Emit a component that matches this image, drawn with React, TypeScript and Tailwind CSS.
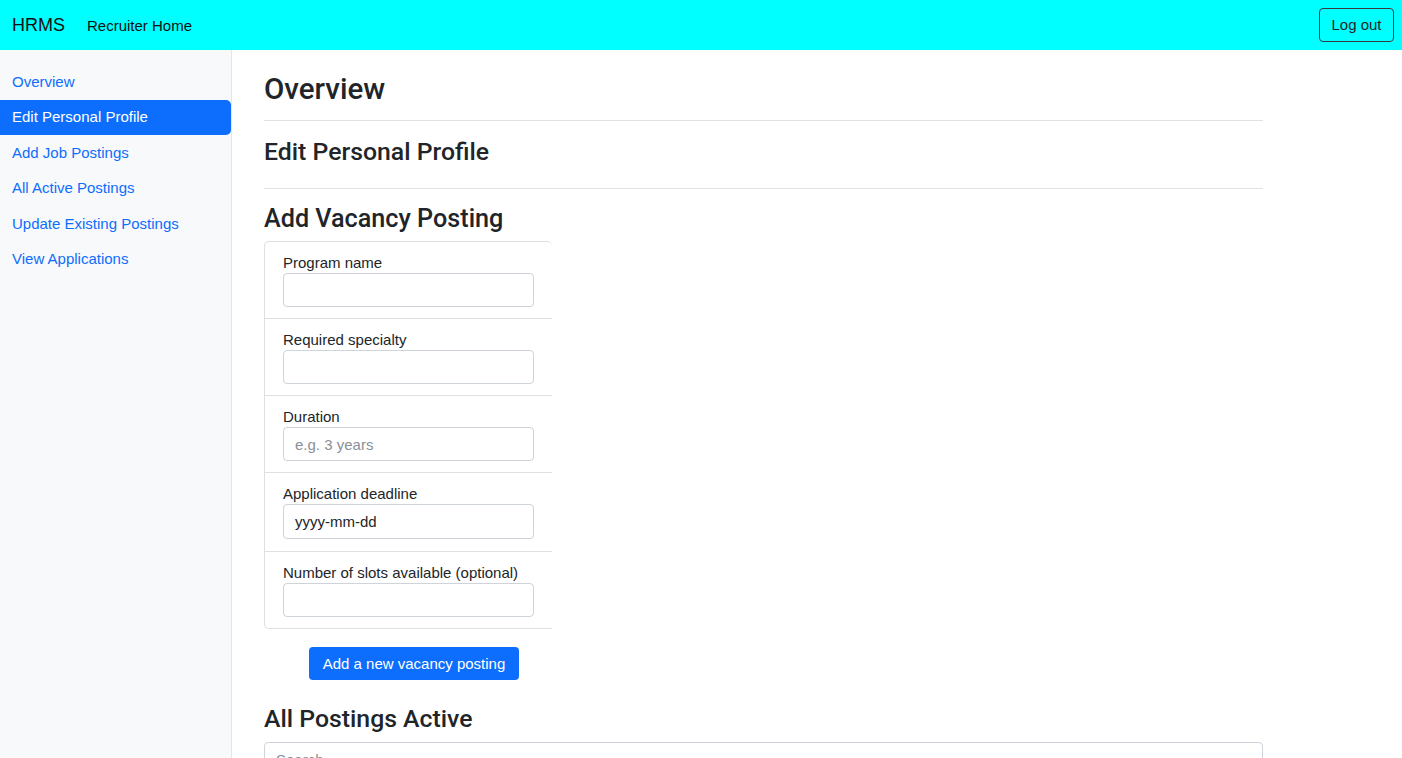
import React from "react";

const font = { fontFamily: '"Liberation Sans", Arial, sans-serif' };
const hfont = { fontFamily: 'Roboto, "Liberation Sans", Arial, sans-serif' };

function Field({ label, placeholder, value, last, tall }: { label: string; placeholder?: string; value?: string; last?: boolean; tall?: boolean }) {
  return (
    <div className={`pl-[18px] pr-[17px] pt-[10px] ${tall ? "pb-[12px]" : "pb-[11px]"} ${last ? "" : "border-b border-[#dfdfdf]"}`}>
      <div className="text-[15px] leading-[21px] text-[#212529]">{label}</div>
      <div className={`w-[251px] ${tall ? "h-[35px]" : "h-[34px]"} border border-[#ced4da] rounded-[4px] bg-white flex items-center px-[11px] pt-[2px] text-[15px]`}>
        {placeholder && <span className="text-[#8a9097]">{placeholder}</span>}
        {value && <span className="text-[#212529]">{value}</span>}
      </div>
    </div>
  );
}

export default function App() {
  const nav = ["Overview", "Edit Personal Profile", "Add Job Postings", "All Active Postings", "Update Existing Postings", "View Applications"];
  return (
    <div style={font} className="w-[1402px] h-[758px] overflow-hidden bg-white text-[#212529] flex flex-col">
      <header className="h-[50px] shrink-0 bg-[#00ffff] flex items-center pl-[12px] pr-[8px]">
        <span className="text-[18px] text-[#111] pt-[1px]">HRMS</span>
        <span className="ml-[22px] text-[15px] text-[#111] pt-[3px]">Recruiter Home</span>
        <button className="ml-auto h-[34px] w-[75px] border border-[#343a40] rounded-[4px] text-[15px] text-[#212529] pt-[1px]">Log out</button>
      </header>
      <div className="flex flex-1 min-h-0">
        <aside className="w-[232px] shrink-0 bg-[#f8f9fa] border-r border-[#e3e5e8] pt-[14px]">
          {nav.map((n, i) => (
            <div
              key={n}
              className={`h-[35.5px] flex items-center px-[12px] text-[15px] ${i === 1 ? "bg-[#0d6efd] text-white rounded-r-[5px]" : "text-[#0d6efd]"}`}
            >
              {n}
            </div>
          ))}
        </aside>
        <main className="flex-1 pl-[32px] pt-[22px]">
          <div className="w-[999px]">
            <h2 style={hfont} className="text-[29.5px] leading-[34px] font-medium">Overview</h2>
            <hr className="mt-[14px] border-0 border-t border-[#e2e2e2]" />
            <h3 style={hfont} className="mt-[15px] pt-[1px] text-[24.8px] leading-[30px] font-medium">Edit Personal Profile</h3>
            <hr className="mt-[21px] border-0 border-t border-[#e2e2e2]" />
            <h3 style={hfont} className="mt-[14px] pt-[1px] text-[25.2px] leading-[30px] font-medium">Add Vacancy Posting</h3>
            <div className="mt-[7px] w-[288px] border-l border-t border-b border-[#dfdfdf] rounded-l-[5px] rounded-tr-[5px]">
              <Field label="Program name" />
              <Field label="Required specialty" />
              <Field label="Duration" placeholder="e.g. 3 years" />
              <Field label="Application deadline" value="yyyy-mm-dd" tall />
              <Field label="Number of slots available (optional)" last />
            </div>
            <button className="mt-[18px] ml-[45px] h-[33px] w-[210px] bg-[#0d6efd] rounded-[4px] text-white text-[15px] pt-[1px]">
              Add a new vacancy posting
            </button>
            <h3 style={hfont} className="mt-[23px] pt-[1px] text-[24.8px] leading-[30px] font-medium">All Postings Active</h3>
            <div className="mt-[8px] h-[34px] border border-[#ced4da] rounded-[4px] flex items-center px-[11px] pt-[2px] text-[15px] text-[#8a9097]">
              Search
            </div>
          </div>
        </main>
      </div>
    </div>
  );
}
